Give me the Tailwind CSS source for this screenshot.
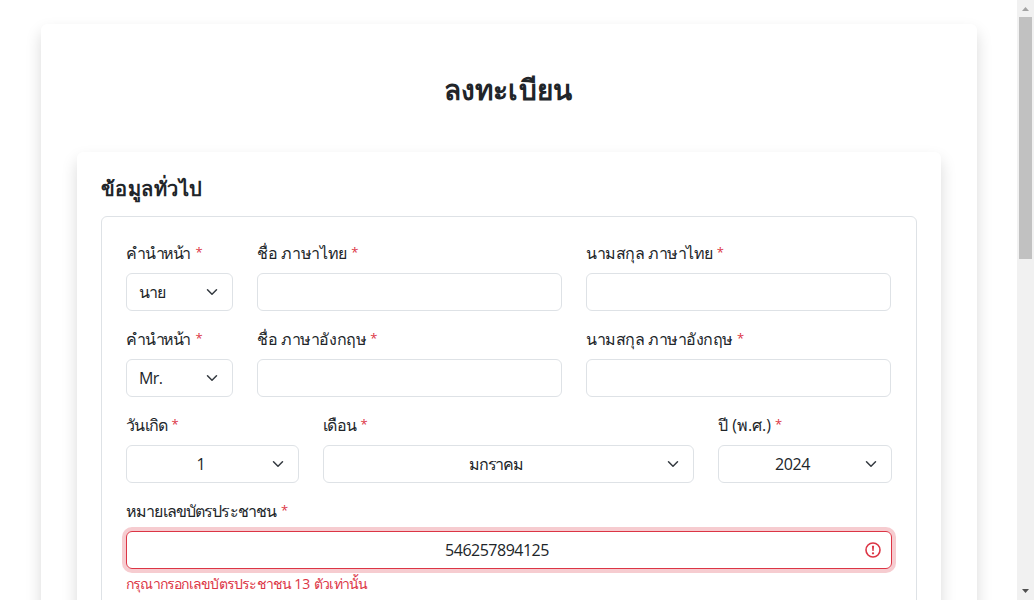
<!DOCTYPE html>
<html lang="th">
<head>
<meta charset="utf-8">
<title>ลงทะเบียน</title>
<script src="https://cdn.jsdelivr.net/npm/@tailwindcss/browser@4"></script>
</head>
<body class="bg-white">
<svg class="hidden"><symbol id="chev" viewBox="0 0 16 16"><path fill="none" stroke="#343a40" stroke-linecap="round" stroke-linejoin="round" stroke-width="2" d="m2 5 6 6 6-6"/></symbol></svg>
<div class="flex h-[600px] overflow-hidden font-['Open_Sans',sans-serif] text-base leading-6 text-[#212529]">
  <main class="h-[600px] w-[1017px] shrink-0 overflow-hidden pl-[41px] pr-10 pt-6">
    <div class="h-[1200px] rounded-md bg-white px-9 pt-12 shadow-[0_8px_16px_rgba(0,0,0,0.15)]">
      <h1 class="h-20 pr-0.5 text-center text-[28px] font-semibold leading-[34px] tracking-[0.1px]"><span>ลงทะเบียน</span></h1>
      <section class="h-[1000px] rounded-md bg-white px-6 pt-[25px] shadow-[0_8px_16px_rgba(0,0,0,0.15)]">
        <h2 class="mb-[15px] h-6 text-xl font-semibold leading-6 tracking-[0.45px]"><span>ข้อมูลทั่วไป</span></h2>
        <div class="flex h-[900px] flex-col gap-4 rounded-md border border-[#dee2e6] p-6">
          <div class="grid grid-cols-[107px_305px_305px] gap-6">
            <div><label class="mb-2 flex h-6 gap-1 whitespace-nowrap"><span class="tracking-[-1.4px] mr-[1.4px]">คำนำหน้า</span> <span class="text-[13px] leading-[22px] text-[#dc3545]">*</span></label>
              <div class="flex h-[38px] items-center justify-between rounded-md border border-[#dee2e6] pl-3 pr-3"><span class="tracking-[-0.9px]">นาย</span><svg class="h-3 w-4"><use href="#chev"/></svg></div></div>
            <div><label class="mb-2 flex h-6 gap-1 whitespace-nowrap"><span class="tracking-[-0.3px]">ชื่อ ภาษาไทย</span> <span class="text-[13px] leading-[22px] text-[#dc3545]">*</span></label>
              <div class="h-[38px] rounded-md border border-[#dee2e6]"></div></div>
            <div><label class="mb-2 flex h-6 gap-1 whitespace-nowrap"><span class="tracking-[-0.45px]">นามสกุล ภาษาไทย</span> <span class="text-[13px] leading-[22px] text-[#dc3545]">*</span></label>
              <div class="h-[38px] rounded-md border border-[#dee2e6]"></div></div>
          </div>
          <div class="grid grid-cols-[107px_305px_305px] gap-6">
            <div><label class="mb-2 flex h-6 gap-1 whitespace-nowrap"><span class="tracking-[-1.4px] mr-[1.4px]">คำนำหน้า</span> <span class="text-[13px] leading-[22px] text-[#dc3545]">*</span></label>
              <div class="flex h-[38px] items-center justify-between rounded-md border border-[#dee2e6] pl-3 pr-3"><span class="tracking-[-0.6px]">Mr.</span><svg class="h-3 w-4"><use href="#chev"/></svg></div></div>
            <div><label class="mb-2 flex h-6 gap-1 whitespace-nowrap"><span class="tracking-[-0.4px]">ชื่อ ภาษาอังกฤษ</span> <span class="text-[13px] leading-[22px] text-[#dc3545]">*</span></label>
              <div class="h-[38px] rounded-md border border-[#dee2e6]"></div></div>
            <div><label class="mb-2 flex h-6 gap-1 whitespace-nowrap"><span class="tracking-[-0.45px]">นามสกุล ภาษาอังกฤษ</span> <span class="text-[13px] leading-[22px] text-[#dc3545]">*</span></label>
              <div class="h-[38px] rounded-md border border-[#dee2e6]"></div></div>
          </div>
          <div class="grid grid-cols-[173px_371px_174px] gap-6">
            <div><label class="mb-2 flex h-6 gap-1 whitespace-nowrap"><span class="tracking-[-0.7px]">วันเกิด</span> <span class="text-[13px] leading-[22px] text-[#dc3545]">*</span></label>
              <div class="flex h-[38px] items-center rounded-md border border-[#dee2e6] px-3"><span class="grow pr-[7px] text-center">1</span><svg class="h-3 w-4"><use href="#chev"/></svg></div></div>
            <div><label class="mb-2 flex h-6 gap-1 whitespace-nowrap"><span class="tracking-[-0.6px]">เดือน</span> <span class="text-[13px] leading-[22px] text-[#dc3545]">*</span></label>
              <div class="flex h-[38px] items-center rounded-md border border-[#dee2e6] px-3"><span class="grow pr-[9px] text-center tracking-[-1.1px]">มกราคม</span><svg class="h-3 w-4"><use href="#chev"/></svg></div></div>
            <div><label class="mb-2 flex h-6 gap-1 whitespace-nowrap"><span>ปี (พ.ศ.)</span> <span class="text-[13px] leading-[22px] text-[#dc3545]">*</span></label>
              <div class="flex h-[38px] items-center rounded-md border border-[#dee2e6] px-3"><span class="grow pr-[9px] text-center tracking-[-0.4px]">2024</span><svg class="h-3 w-4"><use href="#chev"/></svg></div></div>
          </div>
          <div>
            <label class="mb-2 flex h-6 gap-1 whitespace-nowrap"><span class="tracking-[-0.87px] mr-[0.8px]">หมายเลขบัตรประชาชน</span> <span class="text-[13px] leading-[22px] text-[#dc3545]">*</span></label>
            <div class="flex h-[38px] items-center rounded-md border border-[#dc3545] pl-3 pr-2.5 shadow-[0_0_0_4px_rgba(220,53,69,0.25)]"><span class="grow pl-0.5 pr-7 -mr-4 text-center tracking-[-0.5px]">546257894125</span>
              <svg class="size-4 shrink-0" viewBox="0 0 16 16" fill="none" stroke="#dc3545"><circle cx="8" cy="8" r="7" stroke-width="1.6"/><path d="M6.9 3.8h2.2l-.5 5.3H7.4z" fill="#dc3545" stroke="none"/><circle cx="8" cy="11.3" r="1.15" fill="#dc3545" stroke="none"/></svg></div>
            <div class="mt-1 whitespace-nowrap text-sm leading-[21px] tracking-[-0.79px] text-[#dc3545]"><span>กรุณากรอกเลขบัตรประชาชน <span class="tracking-normal">13 </span>ตัวเท่านั้น</span></div>
          </div>
        </div>
      </section>
    </div>
  </main>
  <aside class="flex h-[600px] w-[17px] shrink-0 flex-col items-center justify-between bg-[#f1f1f1]">
    <svg class="h-[17px] w-[17px] shrink-0"><path d="M5 11h7L8.5 7z" fill="#a3a3a3"/></svg>
    <div class="mb-auto h-[242px] w-[13px] bg-[#c1c1c1]"></div>
    <svg class="h-[17px] w-[17px] shrink-0"><path d="M5 6h7l-3.5 4z" fill="#505050"/></svg>
  </aside>
</div>
</body>
</html>
